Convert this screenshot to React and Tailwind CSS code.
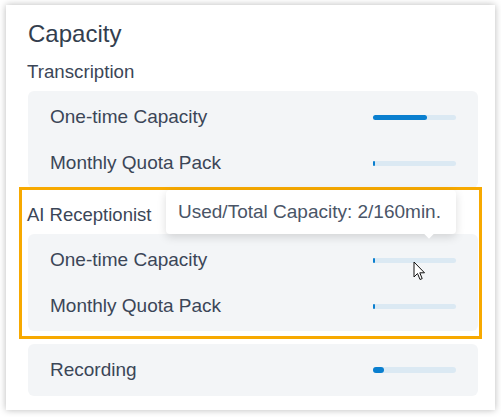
const font = { fontFamily: '"Liberation Sans", Arial, sans-serif' }

function Bar({ pct, thick }) {
  return (
    <div className={`relative w-[83px] rounded-full bg-[#dbe9f3] ${thick ? 'h-[6px]' : 'h-[5px]'}`}>
      <div
        className="absolute left-0 top-0 h-full rounded-full bg-[#0a7fcf]"
        style={{ width: `${pct}%`, minWidth: thick ? 0 : 2 }}
      />
    </div>
  )
}

function Row({ label, pct }) {
  return (
    <div className="flex h-[46px] items-center justify-between">
      <span className="text-[19px] text-[#3b4657]">{label}</span>
      <Bar pct={pct} />
    </div>
  )
}

function Group({ rows }) {
  return (
    <div className="mt-[7px] rounded-md bg-[#f3f5f7] pb-[2px] pl-[22px] pr-[22px] pt-[3px]">
      {rows.map((r) => (
        <Row key={r.label} {...r} />
      ))}
    </div>
  )
}

export default function App() {
  return (
    <div className="relative h-[417px] w-[501px] bg-white" style={font}>
      <div className="ml-[6px] mt-[5px] w-[489px] bg-white pb-[14px] pl-[22px] pr-[17px] pt-[13px] shadow-[0_0_7px_rgba(0,0,0,0.28)]">
        <h2 className="text-[24px] leading-[32px] text-[#333e4e]">Capacity</h2>
        <p className="-ml-px mt-[10px] text-[18.7px] leading-[24px] text-[#3b4657]">Transcription</p>
        <Group
          rows={[
            { label: 'One-time Capacity', pct: 65 },
            { label: 'Monthly Quota Pack', pct: 0 },
          ]}
        />
        <p className="-ml-px mt-[15px] text-[18.5px] leading-[24px] text-[#3b4657]">AI Receptionist</p>
        <Group
          rows={[
            { label: 'One-time Capacity', pct: 0 },
            { label: 'Monthly Quota Pack', pct: 0 },
          ]}
        />
        <div className="mt-[13px] flex h-[52px] items-center justify-between rounded-md bg-[#f3f5f7] pl-[22px] pr-[22px]">
          <span className="text-[19px] text-[#3b4657]">Recording</span>
          <Bar pct={13} thick />
        </div>
      </div>

      {/* highlight */}
      <div className="pointer-events-none absolute left-[19px] top-[182px] h-[152px] w-[463px] border-[3px] border-[#f7a900]" />

      {/* tooltip */}
      <div className="absolute left-[166px] top-[185px] flex h-[44px] w-[290px] items-center rounded bg-white pl-[12px] shadow-[0_3px_10px_rgba(0,0,0,0.14)]">
        <span className="text-[19px] text-[#4a5567]">Used/Total Capacity: 2/160min.</span>
        <div className="absolute left-[259px] top-[39px] h-[8px] w-[8px] rotate-45 bg-white" />
      </div>

      {/* cursor */}
      <svg className="absolute left-[413px] top-[256px]" width="13" height="20" viewBox="0 0 13 20">
        <path d="M1 1 L1 16 L4.5 12.5 L7 18.5 L9.2 17.6 L6.8 11.8 L11.5 11.8 Z" fill="#fff" stroke="#111" strokeWidth="1" strokeLinejoin="round" />
      </svg>
    </div>
  )
}
